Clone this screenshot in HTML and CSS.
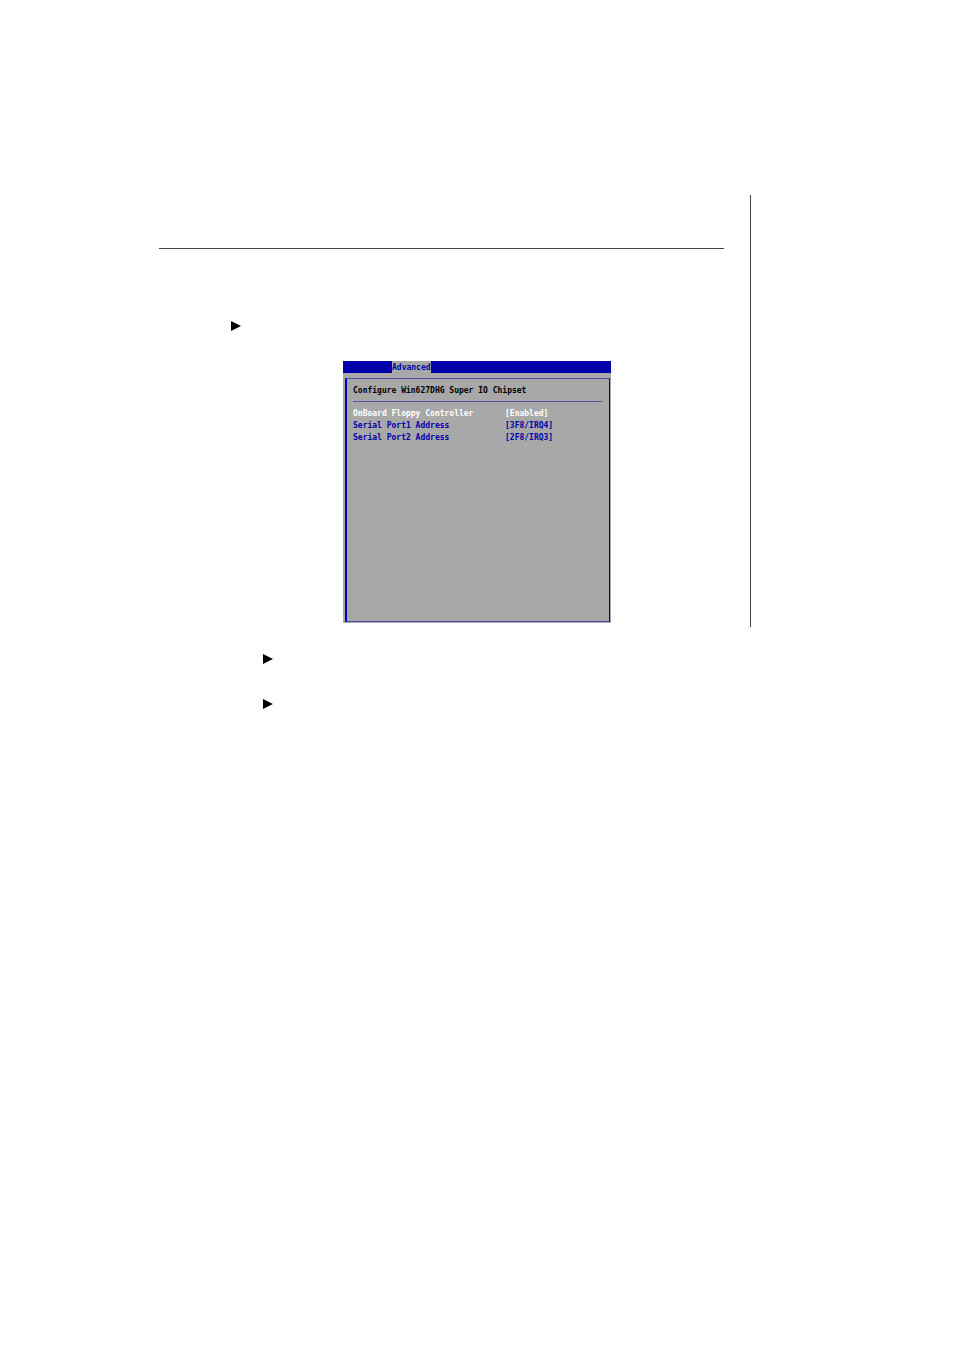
FILE: index.html
```html
<!DOCTYPE html>
<html lang="en">
<head>
  <meta charset="UTF-8" />
  <title>Super IO Configuration</title>
  <link rel="stylesheet" href="styles.css">
</head>
<body>

  <main class="page">
    <section class="chapter">
      <div class="chapter-head"></div>

      <div class="item">
        <svg class="arrow" viewBox="0 0 10 10"><path d="M0 0L10 5L0 10Z" /></svg>
      </div>

      <div class="bios">
        <div class="menu">
          <button type="button" class="tab">Advanced</button>
        </div>
        <div class="panel">
          <h1>Configure Win627DHG Super IO Chipset</h1>
          <table class="settings">
            <tr class="selected">
              <th scope="row">OnBoard Floppy Controller</th>
              <td>[Enabled]</td>
            </tr>
            <tr>
              <th scope="row">Serial Port1 Address</th>
              <td>[3F8/IRQ4]</td>
            </tr>
            <tr>
              <th scope="row">Serial Port2 Address</th>
              <td>[2F8/IRQ3]</td>
            </tr>
          </table>
        </div>
      </div>
    </section>

    <section class="notes">
      <div class="note">
        <svg class="arrow" viewBox="0 0 10 10"><path d="M0 0L10 5L0 10Z" /></svg>
      </div>
      <div class="note">
        <svg class="arrow" viewBox="0 0 10 10"><path d="M0 0L10 5L0 10Z" /></svg>
      </div>
    </section>
  </main>

</body>
</html>
```

FILE: styles.css
```css
* {
  box-sizing: border-box;
}

body {
  margin: 0;
  background: #fff;
  font-family: "DejaVu Sans Mono", monospace;
  font-size: 8px;
}

.page {
  padding: 195px 203px 0 159px;
}

.chapter {
  padding: 0 26px 4px 0;
  border-right: 1px solid #444;
}

.chapter-head {
  height: 54px;
  margin-bottom: 72px;
  border-bottom: 1px solid #444;
}

.item {
  padding-left: 72px;
  margin-bottom: 30px;
}

.arrow {
  display: block;
  width: 10px;
  height: 10px;
}

/* BIOS setup screen */
.bios {
  width: 268px;
  margin-left: 184px;
  padding-bottom: 1px;
  background: #a8a8a8;
  font-weight: bold;
}

.menu {
  display: flex;
  height: 12px;
  padding-left: 49px;
  background: #0000a8;
}

.tab {
  padding: 2px 0 0;
  border: none;
  background: #a8a8a8;
  color: #0000a8;
  font: inherit;
  line-height: 10px;
}

.panel {
  min-height: 244px;
  margin: 5px 1px 0 2px;
  padding: 6px 7px 0 6px;
  border: 1px solid #4848a8;
  border-left: 2px solid #0000c0;
  border-right-color: #000090;
}

h1 {
  margin: 0 0 6px;
  padding-bottom: 4px;
  border-bottom: 1px solid #5050a8;
  color: #000;
  font-size: 8px;
  line-height: 12px;
}

.settings {
  width: 100%;
  border-collapse: collapse;
  color: #0000a8;
}

.settings th,
.settings td {
  padding: 0;
  text-align: left;
  line-height: 12px;
}

.settings th {
  width: 152px;
}

.selected {
  color: #fff;
}

.notes {
  padding: 27px 0 0 104px;
}

.note {
  margin-bottom: 35px;
}
```
